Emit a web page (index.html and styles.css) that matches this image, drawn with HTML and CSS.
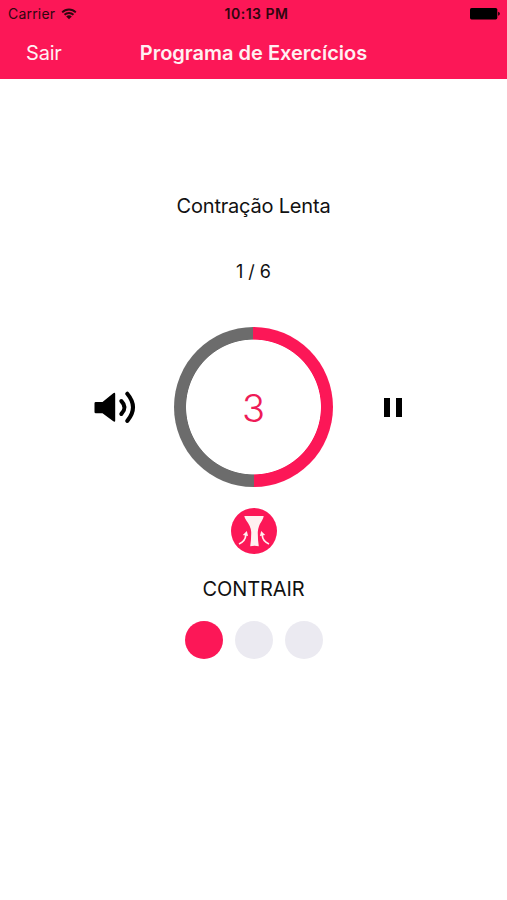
FILE: index.html
```
<!DOCTYPE html>
<html lang="pt">
<head>
  <meta charset="UTF-8">
  <title>Programa de Exercícios</title>
  <link rel="stylesheet" href="styles.css">
</head>
<body>

  <header>
    <div class="status">
      <div class="carrier">
        <span>Carrier</span>
        <svg class="wifi" width="16" height="12" viewBox="0 0 16 12">
          <path d="M1.2 4.3a9.6 9.6 0 0 1 13.6 0M3.5 6.8a6.4 6.4 0 0 1 9 0" fill="none" stroke="#30060f" stroke-width="1.9"/>
          <path d="M5.2 8.5a4 4 0 0 1 5.6 0L8 11.3z" fill="#30060f"/>
        </svg>
      </div>
      <span class="time">10:13 PM</span>
      <svg class="battery" width="30" height="12" viewBox="0 0 30 12">
        <rect width="27.3" height="11.4" rx="1.6"/>
        <path d="M28.2 3.8q1.6.4 1.6 2t-1.6 2z"/>
      </svg>
    </div>
    <nav>
      <a class="exit">Sair</a>
      <h1>Programa de Exercícios</h1>
    </nav>
  </header>

  <main>
    <h2>Contração Lenta</h2>
    <div class="series">1 / 6</div>

    <div class="player">
      <svg class="sound" width="42" height="34" viewBox="0 0 42 34">
        <path d="M1.8 12h6.7L19.3 3.200q1.900-1.200 1.900.8v26.500q0 2-1.900.8L8.500 23.200H1.800q-1.300 0-1.300-1.300v-8.600q0-1.300 1.300-1.300z"/>
        <path d="M27.300 11q6.400 6.500 0 13" fill="none" stroke="#000" stroke-width="4" stroke-linecap="round"/>
        <path d="M33.300 3.700q11.400 13.600 0 27.200" fill="none" stroke="#000" stroke-width="4" stroke-linecap="round"/>
      </svg>
      <div class="timer"><span id="count">3</span></div>
      <div class="pause"></div>
    </div>

    <svg class="phase" width="46" height="46" viewBox="0 0 46 46">
      <circle cx="23" cy="23" r="23" fill="#fc1757"/>
      <g fill="#fff0f0">
        <path d="M13.300 8h19.400q-.2 2.200-1.800 4.700-3.900 5.600-4.100 11.300-.1 7.500 1 14.200-4.300-.9-8.600 0 1.100-6.700 1-14.200-.2-5.500-4.900-11.500-1.700-2.500-2-4.500z"/>
        <path d="M11.800 27l4-4 1.300 5z"/>
        <path d="M34.200 27l-4-4-1.300 5z"/>
      </g>
      <g fill="none" stroke="#fff0f0" stroke-width="1.700">
        <path d="M8 36q6.500-3 6.800-9"/>
        <path d="M38 36q-6.500-3-6.800-9"/>
      </g>
    </svg>

    <div class="action">CONTRAIR</div>

    <div class="dots">
      <span class="dot active"></span>
      <span class="dot"></span>
      <span class="dot"></span>
    </div>
  </main>

</body>
</html>
```

FILE: styles.css
```
body {
  margin: 0;
  font-family: Inter, "Liberation Sans", sans-serif;
  background: #fff;
  color: #111;
}

svg {
  display: block;
}

header {
  height: 79px;
  background: #fc1757;
}

.status {
  display: grid;
  grid-template-columns: 1fr auto 1fr;
  align-items: center;
  height: 27px;
  padding: 0 7px 0 8px;
  font-size: 14px;
  color: #30060f;
}

.carrier {
  display: flex;
  align-items: center;
  gap: 6px;
  letter-spacing: 0.2px;
}

.time {
  font-weight: 600;
  letter-spacing: 0.5px;
  padding-left: 5px;
}

.battery {
  justify-self: end;
}

nav {
  display: grid;
  grid-template-columns: 1fr auto 1fr;
  align-items: center;
  height: 51px;
  color: #fff0f2;
}

.exit {
  padding-left: 26px;
  font-size: 20px;
  letter-spacing: -0.2px;
}

h1 {
  margin: 0;
  font-size: 20px;
  font-weight: 600;
  line-height: 24px;
}

main {
  display: flex;
  flex-direction: column;
  align-items: center;
}

h2 {
  margin: 114px 0 0;
  font-size: 20px;
  font-weight: 400;
  line-height: 26px;
  letter-spacing: -0.2px;
}

.series {
  margin-top: 41px;
  font-size: 18px;
  line-height: 24px;
}

.player {
  display: grid;
  grid-template-columns: 1fr 159px 1fr;
  align-items: center;
  width: 100%;
  margin-top: 43px;
}

.sound {
  margin-left: 94px;
}

.timer {
  display: flex;
  align-items: center;
  justify-content: center;
  height: 160px;
  border-radius: 50%;
  background: radial-gradient(circle, #fff 67px, transparent 67.8px),
    conic-gradient(#fc1757 50%, #6c6c6c 50%);
  font-size: 38px;
  font-weight: 350;
  color: #ee1c57;
}

#count {
  padding-top: 2px;
}

.pause {
  width: 6px;
  height: 19px;
  margin-left: 51px;
  border: solid #000;
  border-width: 0 6px;
}

.phase {
  margin-top: 21px;
}

.action {
  margin-top: 22px;
  font-size: 20px;
  line-height: 26px;
  letter-spacing: -0.1px;
}

.dots {
  display: flex;
  gap: 12px;
  margin-top: 19px;
}

.dot {
  width: 38px;
  height: 38px;
  border-radius: 50%;
  background: #ebeaf1;
}

.dot.active {
  background: #fc1757;
}
```
